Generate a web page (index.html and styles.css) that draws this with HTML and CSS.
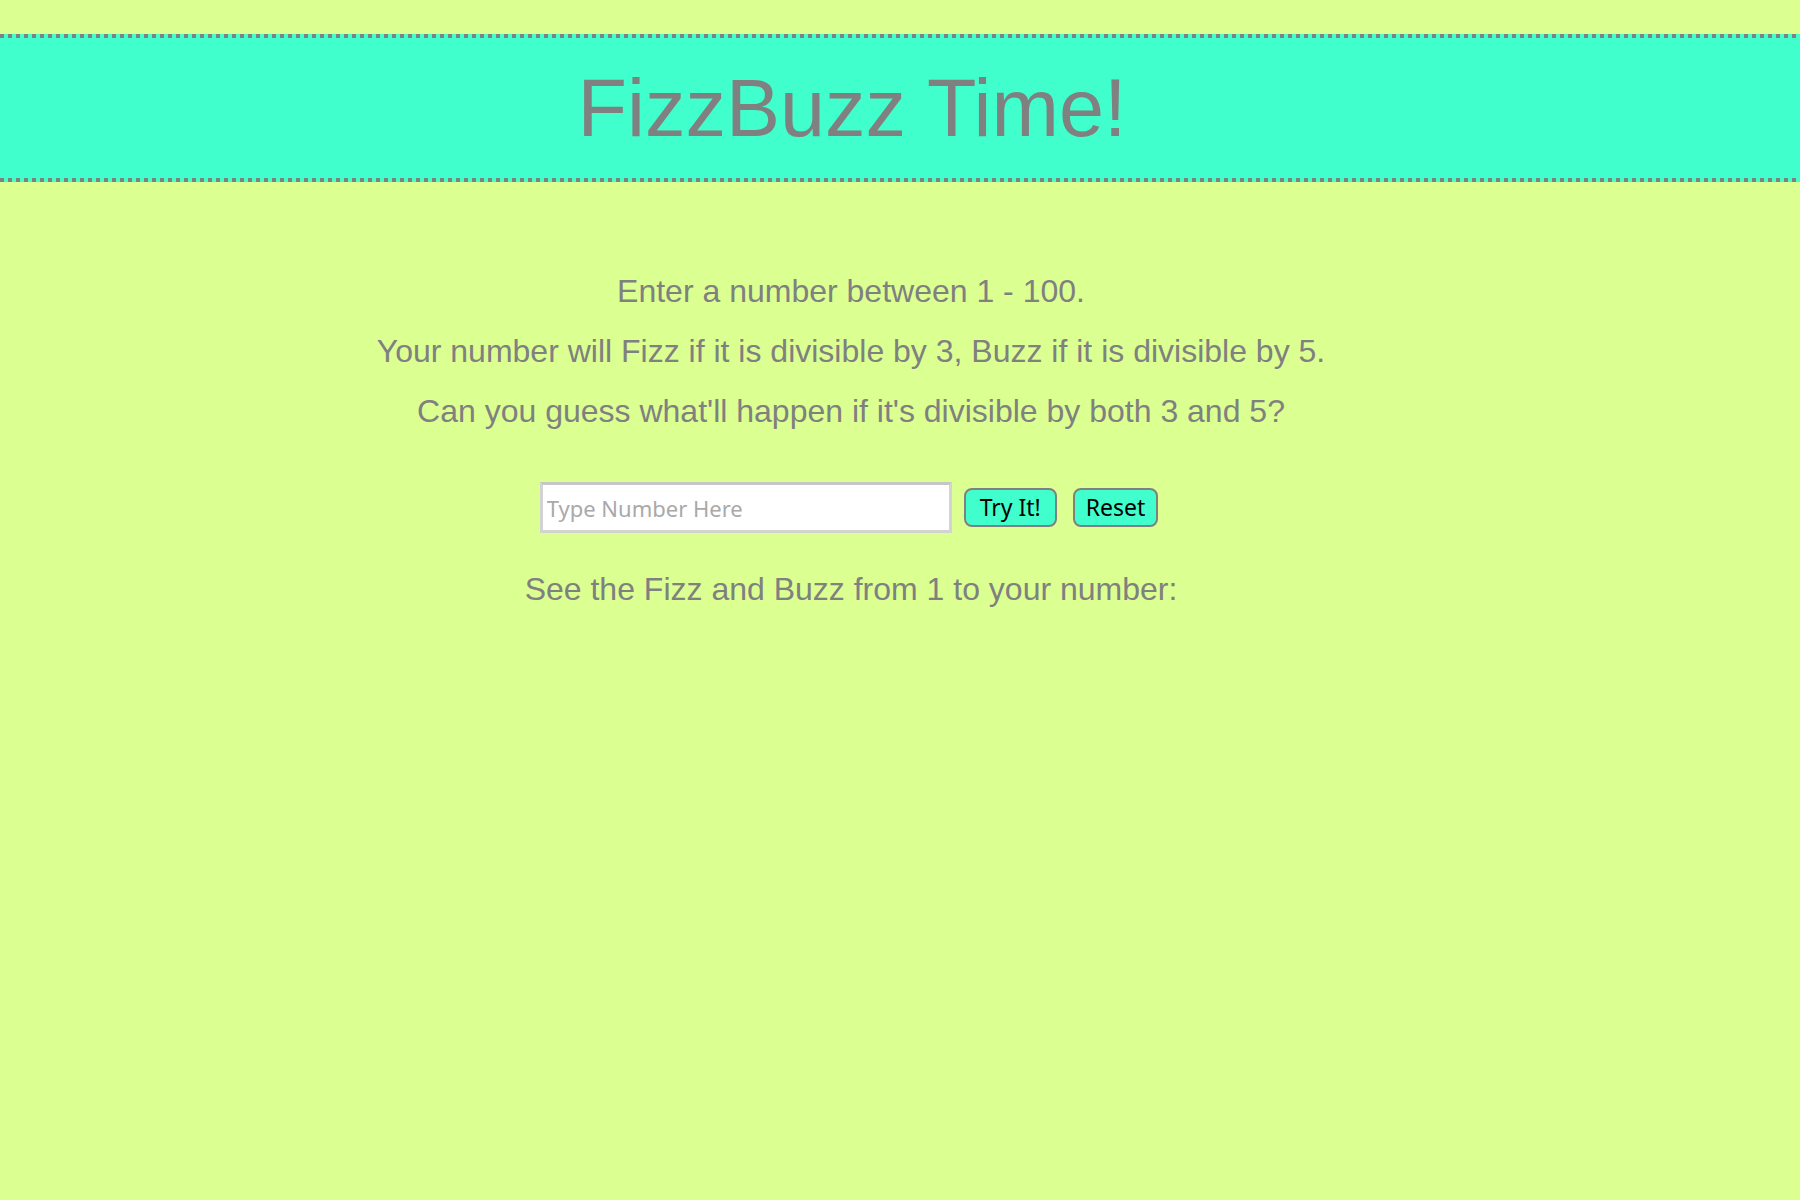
FILE: index.html
```html
<!DOCTYPE html>
<html lang="en">
<head>
<meta charset="utf-8">
<title>FizzBuzz Time!</title>
<link rel="stylesheet" href="styles.css">
</head>
<body>
<header class="banner">
  <h1 class="title">FizzBuzz Time!</h1>
</header>
<main class="content">
  <p class="line">Enter a number between 1 - 100.</p>
  <p class="line">Your number will Fizz if it is divisible by 3, Buzz if it is divisible by 5.</p>
  <p class="line">Can you guess what'll happen if it's divisible by both 3 and 5?</p>
  <div class="controls">
    <input class="number-input" type="text" placeholder="Type Number Here">
    <button class="btn btn-try" type="button">Try It!</button>
    <button class="btn btn-reset" type="button">Reset</button>
  </div>
  <p class="line">See the Fizz and Buzz from 1 to your number:</p>
</main>
</body>
</html>
```
FILE: styles.css
```css
html, body {
  background: #dbff91;
}
body {
  margin: 0;
  font-family: "Liberation Sans", Arial, Helvetica, sans-serif;
  color: #808080;
}
.banner {
  margin-top: 34px;
  padding: 28px 0;
  background-color: #40ffcc;
  background-image:
    repeating-linear-gradient(to right, #808080 0 4px, transparent 4px 8px),
    repeating-linear-gradient(to right, #808080 0 4px, transparent 4px 8px);
  background-size: 100% 4px, 100% 4px;
  background-position: left top, left bottom;
  background-repeat: no-repeat;
}
.title {
  margin: 0;
  padding-right: 96px;
  font-size: 81px;
  font-weight: normal;
  line-height: 92px;
  text-align: center;
  color: #808080;
}
.content {
  margin-top: 79px;
  padding-right: 98px;
  text-align: center;
}
.line {
  margin: 0;
  font-size: 32px;
  line-height: 60px;
}
.controls {
  display: flex;
  justify-content: center;
  align-items: center;
  margin: 41px 0 26px;
  padding-right: 4px;
}
.number-input {
  box-sizing: border-box;
  width: 412px;
  height: 51px;
  margin: 0;
  padding: 0 4px;
  border: 3px solid #d3d3d3;
  border-top-color: #c6c6c6;
  background: #ffffff;
  font-family: "Noto Sans", "Open Sans", sans-serif;
  font-size: 22px;
  color: #333333;
  outline: none;
}
.number-input::placeholder {
  color: #a9a9a9;
}
.btn {
  box-sizing: border-box;
  height: 39px;
  margin: 0;
  padding: 0 14px;
  border: 2px solid #808080;
  border-radius: 8px;
  background: #40ffcc;
  font-family: "Noto Sans", "Open Sans", sans-serif;
  font-size: 23px;
  line-height: 1;
  color: #000000;
}
.btn-try {
  margin-left: 12px;
}
.btn-reset {
  margin-left: 16px;
  padding: 0 11px;
}
```
